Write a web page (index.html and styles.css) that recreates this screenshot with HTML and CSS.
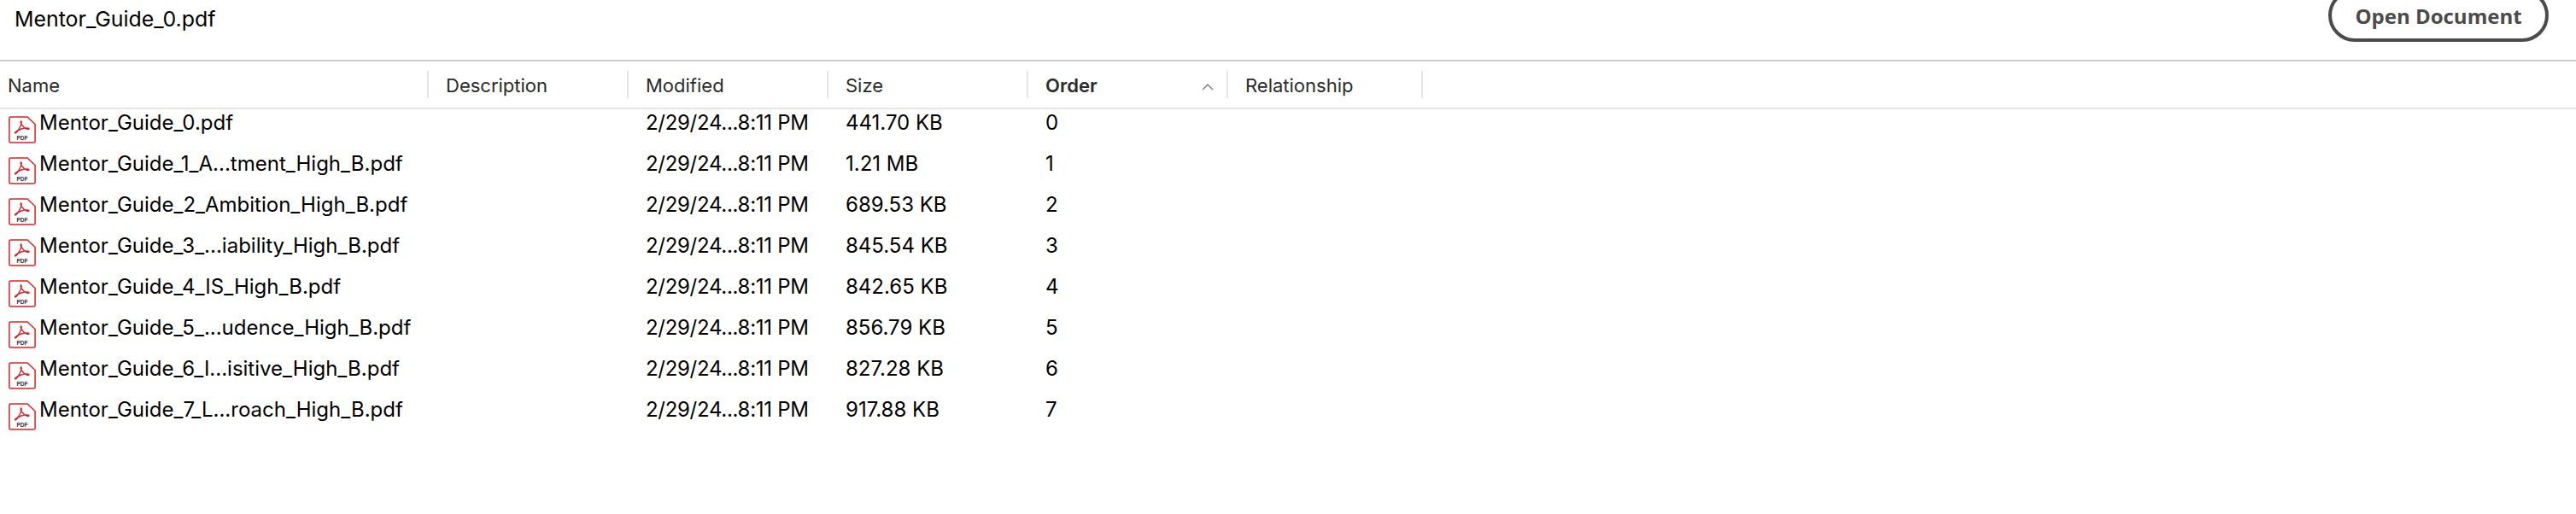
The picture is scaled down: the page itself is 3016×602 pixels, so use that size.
FILE: index.html
```html
<!DOCTYPE html>
<html lang="en">
<head>
  <meta charset="UTF-8" />
  <title>Mentor Guide</title>
  <link rel="stylesheet" href="styles.css">
</head>
<body>
  <svg class="defs" width="0" height="0">
    <symbol id="pdf-mark" viewBox="0 0 32 32">
      <path d="M2.5 .9H22L31.1 9.5V29.5Q31.1 31.1 29.5 31.1H2.5Q.9 31.1 .9 29.5V2.5Q.9 .9 2.5 .9Z" fill="#fff" stroke="#d8232a" stroke-width="1.5"/>
      <path d="M14.6 6C13.5 6.5 14.5 10 19 14C21 15.5 24 16 24 14.8C24 13.5 19.5 13.5 15 15C11 16.5 7.8 18.5 7.5 19.8C7.8 20.5 9 19.8 11 17C13.5 13 16 8 15 6.2Z" fill="none" stroke="#d8232a" stroke-width="1.4"/>
    </symbol>
  </svg>

  <header class="toolbar">
    <div class="doc-title">Mentor_Guide_0.pdf</div>
    <button class="open-btn">Open Document</button>
  </header>

  <div class="table-head">
    <div class="col col-name">Name</div>
    <div class="col">Description</div>
    <div class="col">Modified</div>
    <div class="col">Size</div>
    <div class="col col-sorted">Order
      <svg class="caret" width="14" height="8" viewBox="0 0 14 8"><path d="M1 7L7 1.2L13 7" fill="none" stroke="#8a8a8a" stroke-width="1.6"/></svg>
    </div>
    <div class="col col-last">Relationship</div>
  </div>

  <div class="rows">
    <div class="row">
      <div class="cell cell-name"><svg class="pdf-icon" viewBox="0 0 32 32"><use href="#pdf-mark"/><text x="16" y="27.6" class="pdf-label">PDF</text></svg>Mentor_Guide_0.pdf</div>
      <div class="cell"></div>
      <div class="cell cell-date">2/29/24...8:11 PM</div>
      <div class="cell">441.70 KB</div>
      <div class="cell">0</div>
    </div>
    <div class="row">
      <div class="cell cell-name"><svg class="pdf-icon" viewBox="0 0 32 32"><use href="#pdf-mark"/><text x="16" y="27.6" class="pdf-label">PDF</text></svg>Mentor_Guide_1_A...tment_High_B.pdf</div>
      <div class="cell"></div>
      <div class="cell cell-date">2/29/24...8:11 PM</div>
      <div class="cell">1.21 MB</div>
      <div class="cell">1</div>
    </div>
    <div class="row">
      <div class="cell cell-name"><svg class="pdf-icon" viewBox="0 0 32 32"><use href="#pdf-mark"/><text x="16" y="27.6" class="pdf-label">PDF</text></svg>Mentor_Guide_2_Ambition_High_B.pdf</div>
      <div class="cell"></div>
      <div class="cell cell-date">2/29/24...8:11 PM</div>
      <div class="cell">689.53 KB</div>
      <div class="cell">2</div>
    </div>
    <div class="row">
      <div class="cell cell-name"><svg class="pdf-icon" viewBox="0 0 32 32"><use href="#pdf-mark"/><text x="16" y="27.6" class="pdf-label">PDF</text></svg>Mentor_Guide_3_...iability_High_B.pdf</div>
      <div class="cell"></div>
      <div class="cell cell-date">2/29/24...8:11 PM</div>
      <div class="cell">845.54 KB</div>
      <div class="cell">3</div>
    </div>
    <div class="row">
      <div class="cell cell-name"><svg class="pdf-icon" viewBox="0 0 32 32"><use href="#pdf-mark"/><text x="16" y="27.6" class="pdf-label">PDF</text></svg>Mentor_Guide_4_IS_High_B.pdf</div>
      <div class="cell"></div>
      <div class="cell cell-date">2/29/24...8:11 PM</div>
      <div class="cell">842.65 KB</div>
      <div class="cell">4</div>
    </div>
    <div class="row">
      <div class="cell cell-name"><svg class="pdf-icon" viewBox="0 0 32 32"><use href="#pdf-mark"/><text x="16" y="27.6" class="pdf-label">PDF</text></svg>Mentor_Guide_5_...udence_High_B.pdf</div>
      <div class="cell"></div>
      <div class="cell cell-date">2/29/24...8:11 PM</div>
      <div class="cell">856.79 KB</div>
      <div class="cell">5</div>
    </div>
    <div class="row">
      <div class="cell cell-name"><svg class="pdf-icon" viewBox="0 0 32 32"><use href="#pdf-mark"/><text x="16" y="27.6" class="pdf-label">PDF</text></svg>Mentor_Guide_6_I...isitive_High_B.pdf</div>
      <div class="cell"></div>
      <div class="cell cell-date">2/29/24...8:11 PM</div>
      <div class="cell">827.28 KB</div>
      <div class="cell">6</div>
    </div>
    <div class="row">
      <div class="cell cell-name"><svg class="pdf-icon" viewBox="0 0 32 32"><use href="#pdf-mark"/><text x="16" y="27.6" class="pdf-label">PDF</text></svg>Mentor_Guide_7_L...roach_High_B.pdf</div>
      <div class="cell"></div>
      <div class="cell cell-date">2/29/24...8:11 PM</div>
      <div class="cell">917.88 KB</div>
      <div class="cell">7</div>
    </div>
  </div>
</body>
</html>
```

FILE: styles.css
```css
html, body {
  height: 100%;
}

body {
  margin: 0;
  background-color: #fff;
  color: #000;
  font-family: Inter, 'Liberation Sans', sans-serif;
  overflow: hidden;
}

.defs {
  display: block;
  height: 0;
}

.pdf-label {
  font-family: 'Liberation Sans', sans-serif;
  font-size: 6.6px;
  font-weight: bold;
  fill: #333;
  text-anchor: middle;
}

/* top bar, the button runs off the top of the window */
.toolbar {
  height: 70px;
  box-sizing: border-box;
  padding: 0 32px 21px 17px;
  display: flex;
  justify-content: space-between;
  align-items: flex-end;
  overflow: hidden;
}

.doc-title {
  font-size: 24.9px;
  line-height: 32px;
  margin-bottom: 11px;
}

.open-btn {
  width: 258px;
  height: 62px;
  flex: none;
  background: #fff;
  border: 4px solid #4b4b4b;
  border-radius: 31px;
  color: #4b4b4b;
  font-family: 'Open Sans', sans-serif;
  font-size: 24px;
  font-weight: 700;
  padding: 1px 0 0;
}

.table-head {
  height: 58px;
  box-sizing: border-box;
  border-top: 2px solid #cdcdcd;
  border-bottom: 2px solid #e6e6e6;
  display: flex;
  align-items: center;
}

.col {
  width: 234px;
  height: 32px;
  flex: none;
  box-sizing: border-box;
  padding-left: 20px;
  padding-top: 2px;
  border-right: 2px solid #e6e6e6;
  display: flex;
  align-items: center;
  justify-content: space-between;
  font-size: 22px;
  color: #2b2b2b;
}

.col-name {
  width: 502px;
  padding-left: 9px;
}

.col-last {
  width: 228px;
}

.col-sorted {
  font-weight: 600;
  padding-right: 15px;
}

.caret {
  margin-top: 4px;
}

.rows {
  display: flex;
  flex-direction: column;
}

.row {
  height: 48px;
  display: flex;
}

.cell {
  width: 234px;
  flex: none;
  box-sizing: border-box;
  padding-left: 20px;
  font-size: 24px;
  line-height: 32px;
}

.cell-date {
  letter-spacing: -0.3px;
}

.cell-name {
  width: 502px;
  padding-left: 10px;
  display: flex;
  gap: 4px;
}

.pdf-icon {
  width: 32px;
  height: 32px;
  flex: none;
  margin-top: 8px;
}
```
